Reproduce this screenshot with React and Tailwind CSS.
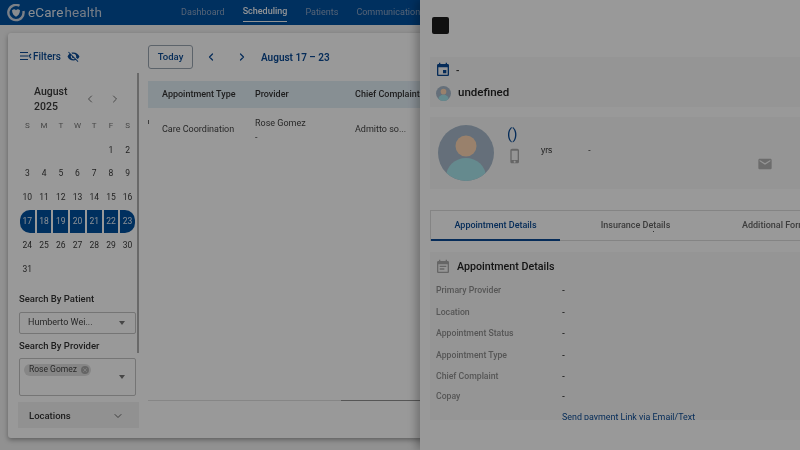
import { ChevronDown, ChevronLeft, ChevronRight, X } from "lucide-react";

const weekDays = ["S", "M", "T", "W", "T", "F", "S"];
const weeks = [
  ["", "", "", "", "", 1, 2],
  [3, 4, 5, 6, 7, 8, 9],
  [10, 11, 12, 13, 14, 15, 16],
  [17, 18, 19, 20, 21, 22, 23],
  [24, 25, 26, 27, 28, 29, 30],
  [31, "", "", "", "", "", ""],
];
const details = [
  ["Primary Provider", "h-[22px]"],
  ["Location", "h-[21px]"],
  ["Appointment Status", "h-[22px]"],
  ["Appointment Type", "h-[21px]"],
  ["Chief Complaint", "h-[21px]"],
  ["Copay", "h-[20px]"],
];

const Avatar = ({ size }) => (
  <svg width={size} height={size} viewBox="0 0 56 56" className="shrink-0">
    <defs>
      <clipPath id={`face-${size}`}>
        <circle cx="28" cy="28" r="28" />
      </clipPath>
    </defs>
    <g clipPath={`url(#face-${size})`}>
      <rect width="56" height="56" fill="#a8bacb" />
      <circle cx="28" cy="21" r="10.5" fill="#ffd8b4" />
      <ellipse cx="28" cy="52" rx="20" ry="19" fill="#a8e6ed" />
    </g>
  </svg>
);

const Icon = ({ d, size = 16, className = "" }) => (
  <svg width={size} height={size} viewBox="0 0 24 24" fill="currentColor" className={`shrink-0 ${className}`}>
    <path d={d} />
  </svg>
);

const eventPath = "M17 12h-5v5h5v-5zM16 1v2H8V1H6v2H5c-1.11 0-1.99.9-1.99 2L3 19c0 1.1.89 2 2 2h14c1.1 0 2-.9 2-2V5c0-1.1-.9-2-2-2h-1V1h-2zm3 18H5V8h14v11z";
const eventNotePath = "M17 10H7v2h10v-2zm2-7h-1V1h-2v2H8V1H6v2H5c-1.11 0-1.99.9-1.99 2L3 19c0 1.1.89 2 2 2h14c1.1 0 2-.9 2-2V5c0-1.1-.9-2-2-2zm0 16H5V8h14v11zm-5-5H7v2h7v-2z";
const phonePath = "M15.5 1h-8C6.12 1 5 2.12 5 3.5v17C5 21.88 6.12 23 7.5 23h8c1.38 0 2.5-1.12 2.5-2.5v-17C18 2.12 16.88 1 15.5 1zm-4 21c-.83 0-1.5-.67-1.5-1.5s.67-1.5 1.5-1.5 1.5.67 1.5 1.5-.67 1.5-1.5 1.5zm4.5-4H7V4h9v14z";
const mailPath = "M20 4H4c-1.1 0-1.99.9-1.99 2L2 18c0 1.1.9 2 2 2h16c1.1 0 2-.9 2-2V6c0-1.1-.9-2-2-2zm0 4l-8 5-8-5V6l8 5 8-5v2z";
const eyeOffPath = "M12 7c2.76 0 5 2.24 5 5 0 .65-.13 1.26-.36 1.83l2.92 2.92c1.51-1.26 2.7-2.89 3.43-4.75-1.73-4.39-6-7.5-11-7.5-1.4 0-2.74.25-3.98.7l2.16 2.16C10.74 7.13 11.35 7 12 7zM2 4.27l2.28 2.28.46.46C3.08 8.3 1.78 10.02 1 12c1.73 4.39 6 7.5 11 7.5 1.55 0 3.03-.3 4.38-.84l.42.42L19.73 22 21 20.73 3.27 3 2 4.27zM7.53 9.8l1.55 1.55c-.05.21-.08.43-.08.65 0 1.66 1.34 3 3 3 .22 0 .44-.03.65-.08l1.55 1.55c-.67.33-1.41.53-2.2.53-2.76 0-5-2.24-5-5 0-.79.2-1.53.53-2.2z";

const Caret = () => <span className="w-0 h-0 border-x-[3.5px] border-x-transparent border-t-[4px] border-t-[#777]" />;

const Sidebar = () => (
  <aside className="w-[131px] shrink-0 h-full flex flex-col pl-[11px]">
    <div className="h-[40px] pt-[6px] flex items-center text-[#0a4a94] text-[10px] font-medium">
      <svg width="14" height="10" viewBox="0 0 14 10" fill="none" stroke="#0a4a94" strokeWidth="1.2" className="shrink-0">
        <path d="M1 1.5h8M1 5h8M1 8.5h8M12 2.8 10 5l2 2.2" />
      </svg>
      <span>Filters</span>
      <Icon d={eyeOffPath} size={13} className="ml-[6px] text-[#0a4a94]" />
    </div>
    <div className="flex-1 min-h-0 flex">
      <div className="w-[117px] shrink-0">
        <div className="h-[40px] flex items-center pl-[15px] pt-[11px]">
          <div className="w-[47px] text-[10.5px] leading-[15px] font-medium text-[#3a3a3a]">August 2025</div>
          <ChevronLeft size={12} className="text-[#777] ml-[3px]" />
          <ChevronRight size={12} className="text-[#777] ml-[13px]" />
        </div>
        <div className="grid grid-cols-7 h-[24px] items-center text-center text-[8px] text-[#777] mt-[1px]">
          {weekDays.map((d, i) => <span key={i}>{d}</span>)}
        </div>
        {weeks.map((week, w) => (
          <div key={w} className="grid grid-cols-7 h-[23.8px] items-center text-center text-[8.5px] text-[#3a3a3a]">
            {week.map((d, i) => {
              const selected = w === 3;
              return (
                <span
                  key={i}
                  className={`h-[23px] flex items-center justify-center ${selected ? "bg-[#00509f] text-[#e6edf5] mx-[1px]" : ""} ${selected && i === 0 ? "rounded-l-[10px]" : ""} ${selected && i === 6 ? "rounded-r-[10px]" : ""}`}
                >
                  {d}
                </span>
              );
            })}
          </div>
        ))}
        <div className="text-[9.5px] font-medium text-[#333] mt-[11px] h-[14px] leading-[14px]">Search By Patient</div>
        <div className="mt-[6px] h-[22px] border border-[#c4c4c4] rounded-[2px] flex items-center justify-between pl-[8px] pr-[10px] text-[9px] text-[#444]">
          <span>Humberto Wei...</span>
          <Caret />
        </div>
        <div className="text-[9.5px] font-medium text-[#333] mt-[5px] h-[14px] leading-[14px]">Search By Provider</div>
        <div className="mt-[5px] h-[38px] border border-[#c4c4c4] rounded-[2px] flex items-center justify-between pl-[4px] pr-[10px] text-[8.5px] text-[#444]">
          <span className="self-start mt-[5px] h-[12px] w-[67px] rounded-full bg-[#e0e0e0] flex items-center justify-between pl-[5px] pr-[2px]">
            Rose Gomez
            <span className="w-[8px] h-[8px] rounded-full bg-[#a8a8a8] flex items-center justify-center">
              <X size={6} strokeWidth={3} className="text-[#e0e0e0]" />
            </span>
          </span>
          <Caret />
        </div>
      </div>
      <div className="w-[2px] h-[280px] shrink-0 ml-[1px] bg-[#b0b0b0]" />
    </div>
  </aside>
);

const Schedule = () => (
  <section className="flex-1 min-w-0 flex flex-col pl-[9px]">
    <div className="h-[48px] shrink-0 flex items-center">
      <button className="w-[45px] h-[24px] rounded-[3px] border border-[#9aa5b1] text-[9.5px] font-medium text-[#0a4a94]">Today</button>
      <ChevronLeft size={12} strokeWidth={2.4} className="text-[#0a4a94] ml-[12px]" />
      <ChevronRight size={12} strokeWidth={2.4} className="text-[#0a4a94] ml-[19px]" />
      <span className="ml-[13px] text-[10px] font-semibold text-[#0a4a94] whitespace-nowrap">August 17 – 23</span>
    </div>
    <div className="h-[27px] shrink-0 grid grid-cols-[93px_100px_1fr] items-center pl-[14px] bg-[#e2eef6] text-[9px] font-medium text-[#333] whitespace-nowrap">
      <span>Appointment Type</span>
      <span>Provider</span>
      <span>Chief Complaint</span>
    </div>
    <div className="h-[42px] mt-[1px] shrink-0 grid grid-cols-[93px_100px_1fr] items-center pl-[14px] text-[9px] text-[#444] whitespace-nowrap relative">
      <span className="absolute left-0 top-[11px] w-px h-[4px] bg-[#666]" />
      <span>Care Coordination</span>
      <span className="flex flex-col leading-[14px]">
        <span>Rose Gomez</span>
        <span>-</span>
      </span>
      <span>Admitto so...</span>
    </div>
    <div className="mt-[249px] flex h-px shrink-0">
      <span className="w-[193px] bg-[#e0e0e0]" />
      <span className="flex-1 bg-[#8f8f8f]" />
    </div>
  </section>
);

const Drawer = () => (
  <div className="absolute top-0 bottom-0 right-0 w-[380px] bg-white pl-[10px] shadow-[-4px_0_8px_rgba(0,0,0,0.25)] overflow-hidden">
    <div className="w-[17px] h-[17px] mt-[17px] ml-[2px] rounded-[2px] bg-[#1c1c1c]" />
    <div className="mt-[23px] h-[50px] bg-[#f9f9f9] pl-[6px] pt-[5px]">
      <div className="flex items-center h-[16px] text-[#333] text-[10px] font-medium">
        <Icon d={eventPath} className="text-[#0a4a94] ml-[-1px]" />
        <span className="ml-[5px]">-</span>
      </div>
      <div className="flex items-center mt-[4px] h-[22px]">
        <Avatar size={15} />
        <span className="ml-[7px] text-[11.5px] font-medium text-[#222]">undefined</span>
      </div>
    </div>
    <div className="mt-[10px] h-[72px] bg-[#f9f9f9] flex items-center pl-[8px] relative">
      <Avatar size={56} />
      <div className="ml-[13px] h-full">
        <div className="text-[15px] leading-[18px] text-[#0a4a94] mt-[8px]">()</div>
        <Icon d={phonePath} size={16} className="text-[#aaa] mt-[5px]" />
      </div>
      <span className="ml-[18px] mb-[6px] text-[8.5px] text-[#333] font-['Liberation_Sans',sans-serif]">yrs</span>
      <span className="ml-[36px] mb-[6px] text-[8.5px] text-[#333]">-</span>
      <Icon d={mailPath} size={16} className="absolute left-[327px] top-[39px] text-[#b5b5b5]" />
    </div>
    <div className="mt-[21px] h-[31px] border-t border-l border-b border-[#ddd] flex text-[9px] font-medium text-[#666] whitespace-nowrap relative">
      <span className="w-[129px] shrink-0 h-[30px] pt-[1px] flex items-center justify-center text-[#0a4a94] border-b-2 border-[#0a4a94]">Appointment Details</span>
      <span className="w-[151px] shrink-0 flex items-center justify-center">Insurance Details</span>
      <span className="pl-[31px] shrink-0 flex items-center">Additional Forms</span>
      <span className="absolute left-[222px] top-[20px] w-px h-px bg-[#555]" />
    </div>
    <div className="mt-[11px] h-[168px] bg-[#f9f9f9] pl-[6px] overflow-hidden">
      <div className="flex items-center h-[28px] pt-[2px]">
        <Icon d={eventNotePath} className="text-[#aaa] ml-[-1px]" />
        <span className="ml-[6px] text-[10.7px] font-medium text-[#222]">Appointment Details</span>
      </div>
      {details.map(([label, height]) => (
        <div key={label} className={`${height} flex items-center text-[8.7px]`}>
          <span className="w-[126px] text-[#8f8f8f] font-medium">{label}</span>
          <span className="text-[#333] font-medium">-</span>
        </div>
      ))}
      <div className="pl-[126px] mt-[4px] text-[8.9px] leading-[12px] text-[#0a4a94] whitespace-nowrap">Send payment Link via Email/Text</div>
    </div>
  </div>
);

const App = () => {
  return (
    <div className="relative w-[800px] h-[450px] overflow-hidden bg-[#f2f2f2] font-['Roboto',sans-serif] blur-[0.35px]">
      <header className="h-[25px] bg-[#00509f] flex items-center pl-[7px] text-[9px] text-[#8fa6c4]">
        <svg width="18" height="18" viewBox="0 0 18 18" className="shrink-0">
          <path d="M12.5 1.8A7.6 7.6 0 1 0 16.4 7" fill="none" stroke="#cdd6e2" strokeWidth="2.4" />
          <path d="M5 6.2c1.8-1.3 3-1 4 0 1-1 2.2-1.3 4 0 0 3.5-2 5.5-4 6.5-2-1-4-3-4-6.5z" fill="#e4e9ef" />
        </svg>
        <span className="ml-[3px] text-[13.5px] tracking-[0.1px] text-[#e4e9f0]">eCare</span>
        <span className="ml-[1px] text-[13.5px] tracking-[0.1px] text-[#c3cfdf]">health</span>
        <nav className="ml-[79px] flex h-full gap-[18px] items-center">
          <span>Dashboard</span>
          <span className="self-start h-[22px] pt-[2px] flex items-center text-[#f2f5f9] font-medium border-b border-[#f2f5f9]">Scheduling</span>
          <span>Patients</span>
          <span>Communications</span>
        </nav>
      </header>
      <main className="mt-[8px] ml-[8px] w-[430px] h-[405px] bg-white rounded-[3px] shadow-[0_2px_5px_rgba(0,0,0,0.35)] flex relative">
        <Sidebar />
        <Schedule />
        {/* Locations accordion hangs over the bottom of the filter column */}
        <div className="absolute left-[10px] top-[369px] w-[121px] h-[26px] pt-[2px] bg-[#f2f2f2] flex items-center justify-between pl-[11px] pr-[15px] text-[9.5px] font-medium text-[#333]">
          <span>Locations</span>
          <ChevronDown size={12} className="text-[#666]" />
        </div>
      </main>
      <Drawer />
      {/* dimming backdrop over the whole page */}
      <div className="absolute inset-0 bg-black/40" />
    </div>
  );
};

export default App;
